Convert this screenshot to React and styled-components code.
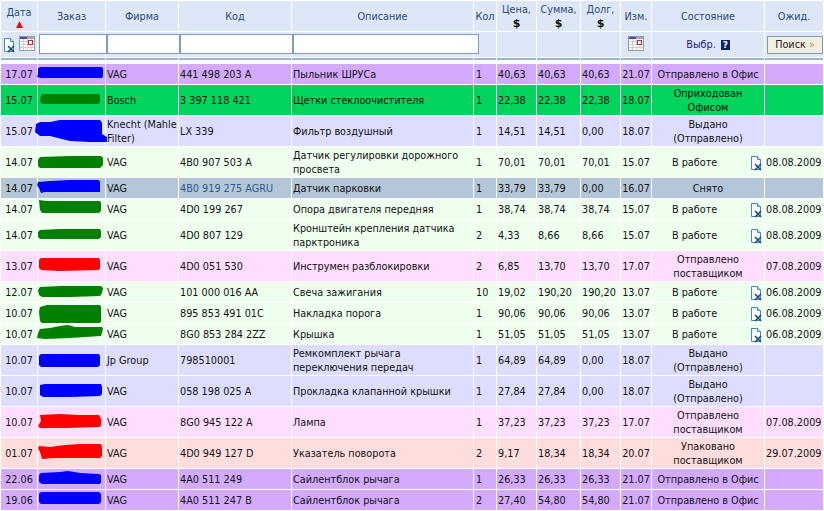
import React from 'react';
import styled, { createGlobalStyle } from 'styled-components';

const Global = createGlobalStyle`
  html, body { margin: 0; padding: 0; background: #fff; }
  body { font-family: "DejaVu Sans", Tahoma, sans-serif; font-size: 9.7px; color: #111; overflow: hidden; }
`;

const WIDTHS = [36, 67, 72, 112, 181, 22, 39, 43, 39, 30, 112, 58];
const TONES = {
  purple: '#d4aaff',
  green: '#00d45c',
  lavender: '#ddddff',
  mint: '#eeffee',
  gray: '#b5c6d8',
  pink: '#ffddff',
  salmon: '#ffdddd',
};
const INK = { blue: '#0000ff', green: '#008000', red: '#ff0000' };

const Table = styled.table`
  border-collapse: separate;
  border-spacing: 1px;
  table-layout: fixed;
  width: 823px;
  background: #fff;
`;
const HeadCell = styled.th`
  box-sizing: border-box;
  height: 30px;
  padding: 2px 0 0;
  background: #dee7f7;
  color: #2a4a7c;
  font-weight: normal;
  line-height: 14px;
  text-align: center;
  vertical-align: middle;
`;
const Dollar = styled.b`
  display: block;
  color: #111;
  font-size: 11px;
`;
const SortMark = styled.svg`
  display: block;
  margin: 1px auto 0;
`;
const FilterCell = styled.td`
  height: 25px;
  padding: 0;
  background: #dee7f7;
  text-align: center;
  vertical-align: middle;
`;
const FilterInput = styled.input`
  position: relative;
  z-index: 1;
  display: block;
  box-sizing: border-box;
  width: ${(p) => p.$w}px;
  height: 20px;
  margin: -1px 0 0 1px;
  padding: 0;
  border: 1px solid #7f9db9;
  background: #fff;
`;
const IconPair = styled.div`
  display: flex;
  height: 17px;
  align-items: flex-start;
  justify-content: center;
  gap: 4px;
`;
const LowIcon = styled.span`
  display: block;
  align-self: flex-end;
  height: 15px;
`;
const CalendarSlot = styled.span`
  display: block;
  height: 15px;
`;
const Pick = styled.span`
  display: inline-flex;
  align-items: center;
  gap: 5px;
  color: #1a1a80;
`;
const HelpMark = styled.span`
  display: inline-block;
  width: 9px;
  height: 10px;
  background: #0a246a;
  color: #fff;
  font-size: 9px;
  font-weight: bold;
  line-height: 10px;
  text-align: center;
`;
const SearchButton = styled.button`
  display: block;
  box-sizing: border-box;
  width: 56px;
  height: 18px;
  margin: 0 0 0 2px;
  padding: 0;
  border: 1px solid #7f9db9;
  background: #f2eee0;
  color: #222;
  font: inherit;
  line-height: 14px;
`;
const Chevrons = styled.span`
  color: #c08a30;
`;
const BandCell = styled.td`
  height: 2px;
  padding: 0;
  background: #9ab4cc;
  font-size: 0;
  line-height: 0;
`;
const GapCell = styled.td`
  height: 2px;
  padding: 0;
  font-size: 0;
  line-height: 0;
`;
const Row = styled.tr`
  background: ${(p) => TONES[p.$tone]};
`;
const Cell = styled.td`
  box-sizing: border-box;
  height: ${(p) => p.$h}px;
  padding: 2px ${(p) => p.$padR ?? 0}px 0 ${(p) => p.$pad ?? 1}px;
  line-height: 14px;
  text-align: ${(p) => p.$align || 'left'};
  vertical-align: middle;
  overflow: visible;
  color: ${(p) => p.$color || 'inherit'};
`;
const InkCell = styled.td`
  height: ${(p) => p.$h}px;
  padding: 0;
  overflow: visible;
`;
const Scribble = styled.svg`
  display: block;
  overflow: visible;
  width: 67px;
  height: ${(p) => p.$h}px;
`;
const StateFlow = styled.div`
  display: flex;
  align-items: center;
  justify-content: space-between;
  padding: 0 0 0 18px;
`;

const DocX = () => (
  <svg width="11" height="15" viewBox="0 0 11 15">
    <path d="M.5.5h6l3 3v10H.5z" fill="#fff" stroke="#4a86b8" />
    <path d="M6.5.5v3h3" fill="#d6e6f2" stroke="#4a86b8" />
    <path d="M4 8l6 6M10 8l-6 6" stroke="#14507e" strokeWidth="1.7" />
  </svg>
);
const Calendar = () => (
  <svg width="16" height="15" viewBox="0 0 16 15">
    <rect x=".5" y=".5" width="15" height="14" fill="#fff" stroke="#9a9a9a" />
    <rect x="1" y="1" width="14" height="2" fill="#a8a8a8" />
    <rect x="1" y="1" width="7" height="2" fill="#4a4a9a" />
    <path d="M1 5.5h14M1 8.5h14M1 11.5h14M4.5 3v11M8.5 3v11M12 3v11" stroke="#cfcfcf" />
    <rect x="9.5" y="4.5" width="4" height="4" fill="#fff" stroke="#b03030" />
  </svg>
);

const DATA = [
  [64, 20, 'purple', '17.07', 'blue', 'M38 68 41 67H102L103 69V76L102 78H41L37 77 38 74Z', 'VAG', '441 498 203 A', 'Пыльник ШРУСа', '1', '40,63', '40,63', '40,63', '21.07', 'Отправлено в Офис', false, ''],
  [85, 30, 'green', '15.07', 'green', 'M41 95 43 94H99L100 96V102L98 104H43L40 102Z', 'Bosch', '3 397 118 421', 'Щетки стеклоочистителя', '1', '22,38', '22,38', '22,38', '18.07', 'Оприходован Офисом', false, ''],
  [116, 30, 'lavender', '15.07', 'blue', 'M36 124 40 122 50 122 60 120H100L102 123V134L107 137V142H90L70 141 62 139 50 136 40 136 35 132Z', 'Knecht (Mahle Filter)', 'LX 339', 'Фильтр воздушный', '1', '14,51', '14,51', '0,00', '18.07', 'Выдано (Отправлено)', false, ''],
  [147, 30, 'mint', '14.07', 'green', 'M40 157 70 156H101L103 158V165L100 168H70L60 168 40 168 38 166V160Z', 'VAG', '4B0 907 503 A', 'Датчик регулировки дорожного просвета', '1', '70,01', '70,01', '70,01', '15.07', 'В работе', true, '08.08.2009'],
  [178, 20, 'gray', '14.07', 'blue', 'M38 182 50 181 70 180H99L100 182V192H45L41 193 39 188 37 185Z', 'VAG', '4B0 919 275 AGRU', 'Датчик парковки', '1', '33,79', '33,79', '0,00', '16.07', 'Снято', false, ''],
  [199, 20, 'mint', '14.07', 'green', 'M39 200 46 201H100L101 203V211L99 213H42L40 210Z', 'VAG', '4D0 199 267', 'Опора двигателя передняя', '1', '38,74', '38,74', '38,74', '15.07', 'В работе', true, '08.08.2009'],
  [220, 30, 'mint', '14.07', 'green', 'M40 230 60 229H100L101 231V237L99 239H60L40 239 38 237V232Z', 'VAG', '4D0 807 129', 'Кронштейн крепления датчика парктроника', '2', '4,33', '8,66', '8,66', '15.07', 'В работе', true, '08.08.2009'],
  [251, 30, 'pink', '13.07', 'red', 'M41 258H99L100 260V269L98 270 60 271 41 270 39 268V260Z', 'VAG', '4D0 051 530', 'Инструмен разблокировки', '2', '6,85', '13,70', '13,70', '17.07', 'Отправлено поставщиком', false, '07.08.2009'],
  [282, 20, 'mint', '12.07', 'green', 'M40 287 60 286H101L103 288 102 293 100 296 70 297H42L39 295 38 290Z', 'VAG', '101 000 016 AA', 'Свеча зажигания', '10', '19,02', '190,20', '190,20', '13.07', 'В работе', true, '06.08.2009'],
  [303, 20, 'mint', '10.07', 'green', 'M40 307 47 305H100L101 307V322L99 323H42L40 321 39 312Z', 'VAG', '895 853 491 01C', 'Накладка порога', '1', '90,06', '90,06', '90,06', '13.07', 'В работе', true, '06.08.2009'],
  [324, 20, 'mint', '10.07', 'green', 'M40 329 50 328 60 326 68 325 75 327H102L103 329 101 336 70 338 45 339 37 338 38 333Z', 'VAG', '8G0 853 284 2ZZ', 'Крышка', '1', '51,05', '51,05', '51,05', '13.07', 'В работе', true, '06.08.2009'],
  [345, 30, 'lavender', '10.07', 'blue', 'M41 354H99L100 356V365L98 367H41L39 365V356Z', 'Jp Group', '798510001', 'Ремкомплект рычага переключения передач', '1', '64,89', '64,89', '0,00', '18.07', 'Выдано (Отправлено)', false, ''],
  [376, 30, 'lavender', '10.07', 'blue', 'M40 385 45 384H101L102 387V394L100 396 70 397H43L40 395Z', 'VAG', '058 198 025 A', 'Прокладка клапанной крышки', '1', '27,84', '27,84', '0,00', '18.07', 'Выдано (Отправлено)', false, ''],
  [407, 30, 'pink', '10.07', 'red', 'M40 415 60 414 80 415H99L101 419V426L99 427 65 428 40 428 38 426 41 421Z', 'VAG', '8G0 945 122 A', 'Лампа', '1', '37,23', '37,23', '37,23', '17.07', 'Отправлено поставщиком', false, '07.08.2009'],
  [438, 30, 'salmon', '01.07', 'red', 'M39 446 50 447 65 445 80 444H101L102 447V456L100 458H55L42 459 40 452 38 448Z', 'VAG', '4D0 949 127 D', 'Указатель поворота', '2', '9,17', '18,34', '18,34', '20.07', 'Упаковано поставщиком', false, '29.07.2009'],
  [469, 20, 'purple', '22.06', 'blue', 'M41 473 60 472 68 471 80 473 99 474 101 475V483L99 484H42L39 482V475Z', 'VAG', '4A0 511 249', 'Сайлентблок рычага', '1', '26,33', '26,33', '26,33', '21.07', 'Отправлено в Офис', false, ''],
  [490, 20, 'purple', '19.06', 'blue', 'M41 492H99L101 494V502L99 504H41L39 502V494Z', 'VAG', '4A0 511 247 B', 'Сайлентблок рычага', '2', '27,40', '54,80', '54,80', '21.07', 'Отправлено в Офис', false, ''],
];

export default function App() {
  return (
    <>
      <Global />
      <Table>
        <colgroup>
          {WIDTHS.map((w, i) => (
            <col key={i} width={w} />
          ))}
        </colgroup>
        <thead>
          <tr>
            <HeadCell>
              Дата
              <SortMark width="7" height="7" viewBox="0 0 7 7">
                <path d="M3.5 0 7 7H0z" fill="#e01010" />
              </SortMark>
            </HeadCell>
            <HeadCell>Заказ</HeadCell>
            <HeadCell>Фирма</HeadCell>
            <HeadCell>Код</HeadCell>
            <HeadCell>Описание</HeadCell>
            <HeadCell>Кол</HeadCell>
            <HeadCell>Цена,<Dollar>$</Dollar></HeadCell>
            <HeadCell>Сумма,<Dollar>$</Dollar></HeadCell>
            <HeadCell>Долг,<Dollar>$</Dollar></HeadCell>
            <HeadCell>Изм.</HeadCell>
            <HeadCell>Состояние</HeadCell>
            <HeadCell>Ожид.</HeadCell>
          </tr>
          <tr>
            <FilterCell>
              <IconPair>
                <LowIcon><DocX /></LowIcon>
                <CalendarSlot><Calendar /></CalendarSlot>
              </IconPair>
            </FilterCell>
            <FilterCell><FilterInput $w={68} /></FilterCell>
            <FilterCell><FilterInput $w={73} /></FilterCell>
            <FilterCell><FilterInput $w={113} /></FilterCell>
            <FilterCell><FilterInput $w={186} /></FilterCell>
            <FilterCell />
            <FilterCell />
            <FilterCell />
            <FilterCell />
            <FilterCell><Calendar /></FilterCell>
            <FilterCell>
              <Pick>Выбр. <HelpMark>?</HelpMark></Pick>
            </FilterCell>
            <FilterCell><SearchButton>Поиск <Chevrons>»</Chevrons></SearchButton></FilterCell>
          </tr>
          <tr>{WIDTHS.map((w, i) => <BandCell key={i} />)}</tr>
          <tr>{WIDTHS.map((w, i) => <GapCell key={i} />)}</tr>
        </thead>
        <tbody>
          {DATA.map(([top, h, tone, date, ink, shape, firm, code, desc, qty, price, sum, debt, changed, state, hasIcon, due], i) => (
            <Row key={i} $tone={tone}>
              <Cell $h={h} $align="center" $pad={0}>{date}</Cell>
              <InkCell $h={h}>
                <Scribble $h={h} viewBox={`38 ${top} 67 ${h}`}>
                  <path d={shape} fill={INK[ink]} />
                </Scribble>
              </InkCell>
              <Cell $h={h}>{firm}</Cell>
              <Cell $h={h} $color={code.endsWith('AGRU') ? '#2a5a8a' : undefined}>{code}</Cell>
              <Cell $h={h}>{desc}</Cell>
              <Cell $h={h} $pad={2}>{qty}</Cell>
              <Cell $h={h}>{price}</Cell>
              <Cell $h={h}>{sum}</Cell>
              <Cell $h={h}>{debt}</Cell>
              <Cell $h={h} $align="center" $pad={0}>{changed}</Cell>
              <Cell $h={h} $align="center" $pad={2} $padR={2}>
                {hasIcon ? (
                  <StateFlow>{state}<DocX /></StateFlow>
                ) : (
                  state
                )}
              </Cell>
              <Cell $h={h}>{due}</Cell>
            </Row>
          ))}
        </tbody>
      </Table>
    </>
  );
}
